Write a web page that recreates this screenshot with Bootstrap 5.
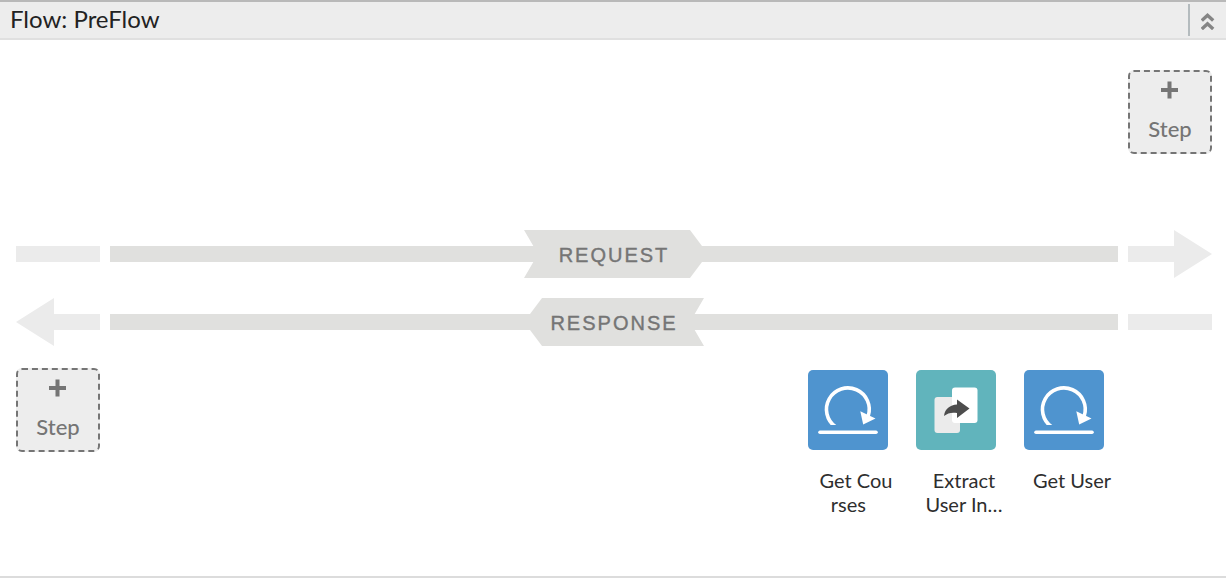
<!DOCTYPE html>
<html lang="en">
<head>
<meta charset="utf-8">
<meta name="viewport" content="width=device-width, initial-scale=1">
<title>Flow: PreFlow</title>
<link href="https://cdn.jsdelivr.net/npm/bootstrap@5.3.0/dist/css/bootstrap.min.css" rel="stylesheet">
<style>
  body { font-family: Lato, "Open Sans", sans-serif; color: #2e2e2e; background: #fff; }
  .flow-header { height: 40px; background: #ededed; border-top: 2px solid #b9b9b9; border-bottom: 2px solid #e0e0e0; }
  .flow-title { font-size: 24px; line-height: 32px; padding: 0 0 2px 10px; color: #222; }
  .flow-toggle { width: 38px; height: 32px; border: 0; border-left: 2px solid #b4bbbe; background: none; }
  .flow-stage { padding: 30px 14px 60px 16px; border-bottom: 2px solid #dcdcdc; }
  .step-btn { width: 84px; height: 84px; border: 2px dashed #757575; border-radius: 6px; background: #ededed; color: #757575; font-size: 22px; line-height: 28px; font-weight: 500; gap: 16px; }
  .lanes { margin-top: 76px; gap: 20px; }
  .lane { display: grid; grid-template-columns: 84px 1fr 84px; gap: 10px; height: 48px; align-items: center; }
  .bar { height: 16px; background: #ebebeb; }
  .bar-main { background: linear-gradient(#e0e0de, #e0e0de) center / 100% 16px no-repeat; }
  .arrow { height: 48px; background: #ebebeb; }
  .arrow-right { clip-path: polygon(0 16px, 46px 16px, 46px 0, 100% 24px, 46px 100%, 46px 32px, 0 32px); }
  .arrow-left { clip-path: polygon(100% 16px, 38px 16px, 38px 0, 0 24px, 38px 100%, 38px 32px, 100% 32px); }
  .lane-label { width: 180px; height: 48px; padding-top: 1px; font-family: "Liberation Sans", Arial, sans-serif; font-size: 20px; line-height: 48px; letter-spacing: 2px; color: #757575; -webkit-text-stroke: 0.4px #757575; background: #e0e0de; }
  .label-request { clip-path: polygon(0 0, 166px 0, 184px 50%, 166px 100%, 0 100%, 14px 50%); }
  .label-response { clip-path: polygon(100% 0, 18px 0, 0 50%, 18px 100%, 100% 100%, 166px 50%); }
  .response-steps { margin-top: 22px; }
  .policies { gap: 12px; margin-right: 92px; padding-top: 2px; }
  .policy, .policy:hover { width: 96px; font-size: 20px; line-height: 24px; color: #2e2e2e; }
  .policy-name { margin-top: 18px; }
</style>
</head>
<body>
<header class="flow-header d-flex align-items-center justify-content-between">
  <h1 class="flow-title fw-normal m-0">Flow: PreFlow</h1>
  <button type="button" class="flow-toggle d-flex align-items-center justify-content-center p-0" aria-label="Collapse flow">
    <svg width="14" height="20" viewBox="0 0 14 20" fill="none" stroke="#858585" stroke-width="3.400"><path d="M.8 10.500 6.500 5.200l5.700 5.300M.8 19 6.500 13.700l5.700 5.300"/></svg>
  </button>
</header>

<main class="flow-stage">
  <div class="d-flex justify-content-end">
    <button type="button" class="step-btn d-flex flex-column align-items-center justify-content-center p-0">
      <svg width="18" height="18" viewBox="0 0 18 18" fill="#757575"><path d="M6.500 .5h4v6.500H17v4h-6.500v6.500h-4V11H0V7h6.500z"/></svg>
      <span>Step</span>
    </button>
  </div>

  <div class="lanes d-flex flex-column">
    <div class="lane">
      <div class="bar"></div>
      <div class="bar-main d-flex justify-content-center"><div class="lane-label label-request text-center">REQUEST</div></div>
      <div class="arrow arrow-right"></div>
    </div>
    <div class="lane">
      <div class="arrow arrow-left"></div>
      <div class="bar-main d-flex justify-content-center"><div class="lane-label label-response text-center">RESPONSE</div></div>
      <div class="bar"></div>
    </div>
  </div>

  <div class="response-steps d-flex justify-content-between align-items-start">
    <button type="button" class="step-btn d-flex flex-column align-items-center justify-content-center p-0">
      <svg width="18" height="18" viewBox="0 0 18 18" fill="#757575"><path d="M6.500 .5h4v6.500H17v4h-6.500v6.500h-4V11H0V7h6.500z"/></svg>
      <span>Step</span>
    </button>
    <div class="policies d-flex">
      <a href="#courses" class="policy text-decoration-none">
        <svg class="d-block" width="80" height="80" viewBox="0 0 80 80"><rect width="80" height="80" rx="5" fill="#4f94cf"/><path d="M27.500 56.800A21.400 21.400 0 1 1 60.200 46" fill="none" stroke="#fff" stroke-width="3.600"/><path d="M20 55h20v5H20z" fill="#4f94cf"/><path d="M52.300 41.200 67.500 48.500 55.200 54.500z" fill="#fff"/><path d="M12 62.300h56" stroke="#fff" stroke-width="3.600" stroke-linecap="round"/></svg>
        <div class="policy-name text-center">Get Cou<br>rses&nbsp;&nbsp;&nbsp;</div>
      </a>
      <a href="#extract" class="policy text-decoration-none">
        <svg class="d-block" width="80" height="80" viewBox="0 0 80 80"><rect width="80" height="80" rx="5" fill="#61b4bc"/><rect x="18.500" y="27" width="25.500" height="36" rx="3" fill="#ebebeb"/><rect x="36" y="17.500" width="25.500" height="35.500" rx="3" fill="#fff"/><path d="M41 29.500 53.500 38.500 41 48v-5c-5-1-9.500 0-13 3 1-7.500 6-11 13-11.500z" fill="#4d4d4d"/></svg>
        <div class="policy-name text-center">Extract<br>User In…</div>
      </a>
      <a href="#user" class="policy text-decoration-none">
        <svg class="d-block" width="80" height="80" viewBox="0 0 80 80"><rect width="80" height="80" rx="5" fill="#4f94cf"/><path d="M27.500 56.800A21.400 21.400 0 1 1 60.200 46" fill="none" stroke="#fff" stroke-width="3.600"/><path d="M20 55h20v5H20z" fill="#4f94cf"/><path d="M52.300 41.200 67.500 48.500 55.200 54.500z" fill="#fff"/><path d="M12 62.300h56" stroke="#fff" stroke-width="3.600" stroke-linecap="round"/></svg>
        <div class="policy-name text-center">Get User</div>
      </a>
    </div>
  </div>
</main>
<script src="https://cdn.jsdelivr.net/npm/bootstrap@5.3.0/dist/js/bootstrap.bundle.min.js"></script>
</body>
</html>
